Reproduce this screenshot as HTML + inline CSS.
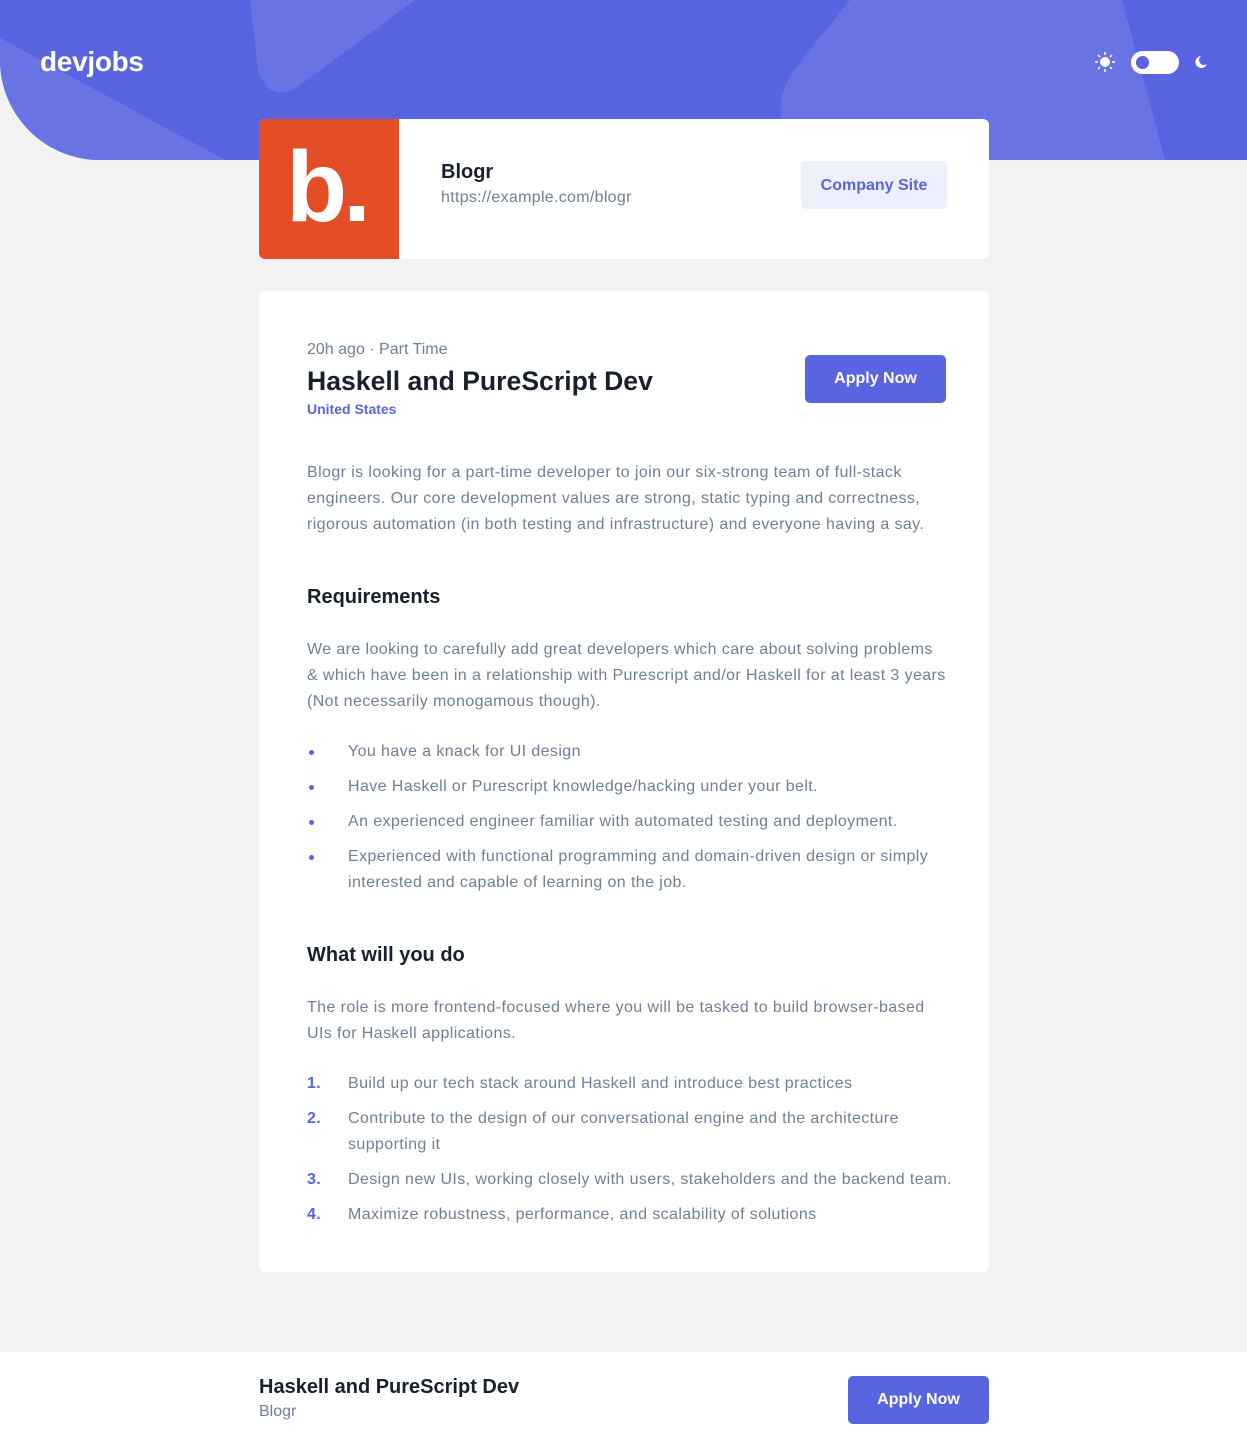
<!DOCTYPE html>
<html><head><meta charset="utf-8"><style>
*{margin:0;padding:0;box-sizing:border-box}
body{width:1247px;height:1448px;background:#F2F2F2;font-family:"Liberation Sans",sans-serif;position:relative;overflow:hidden}
.hdr{position:absolute;left:0;top:0;width:1247px;height:160px;background:#5964E0;border-bottom-left-radius:100px;overflow:hidden}
.logo{position:absolute;left:40px;top:46px;color:#fff;font-size:28px;font-weight:bold;letter-spacing:-0.3px}
.card{position:absolute;background:#fff;border-radius:6px}
p{color:#6E8098;font-size:16px;line-height:26px;letter-spacing:0.4px;white-space:nowrap}
h3{color:#19202D;font-size:20px;font-weight:bold}
ul,ol{list-style:none}
li{position:relative;padding-left:41px;color:#6E8098;font-size:16px;line-height:26px;margin-bottom:9px;letter-spacing:0.4px;white-space:nowrap}
ul li:before{content:"";position:absolute;left:2px;top:11px;width:5px;height:5px;border-radius:50%;background:#5964E0}
ol li span{position:absolute;left:0;color:#5964E0;font-weight:bold}
.btn{position:absolute;background:#5964E0;color:#fff;font-weight:bold;font-size:16px;border-radius:5px;text-align:center;line-height:48px}
</style></head><body>
<div class="hdr">
<svg width="1247" height="160" style="position:absolute;left:0;top:0">
<path d="M0 38 L225 160 L0 160Z" fill="#6A73E4"/>
<path d="M250 0 L415 0 L300 85 Q270 105 258 70Z" fill="#6A73E4"/>
<path d="M850 0 L1122 0 L1165 160 L781 160 L781 100 Q785 80 800 62Z" fill="#6A73E4"/>
</svg>
<div class="logo">devjobs</div>
<svg width="20" height="20" style="position:absolute;left:1095px;top:52px" viewBox="0 0 20 20"><circle cx="10" cy="10" r="5" fill="#fff"/><g stroke="#fff" stroke-width="1.5"><path d="M10 0v3M10 17v3M0 10h3M17 10h3M3 3l2 2M15 15l2 2M3 17l2-2M15 5l2-2"/></g></svg>
<div style="position:absolute;left:1131px;top:51px;width:48px;height:23px;border-radius:12px;background:#fff"><div style="position:absolute;left:5px;top:5px;width:13px;height:13px;border-radius:7px;background:#5964E0"></div></div>
<svg width="14" height="14" style="position:absolute;left:1194px;top:55px" viewBox="0 0 14 14"><path d="M7 1A6 6 0 1 0 13 9 4.5 4.5 0 0 1 7 1Z" fill="#fff"/></svg>
</div>

<div class="card" style="left:259px;top:119px;width:730px;height:140px;overflow:hidden">
<div style="position:absolute;left:0;top:0;width:140px;height:140px;background:#E54D26"></div>
<div style="position:absolute;left:27px;top:18px;color:#fff;font-size:100px;font-weight:bold;line-height:100px;letter-spacing:-4px">b<span style="font-size:100px">.</span></div>
<div style="position:absolute;left:182px;top:42px;color:#19202D;font-size:20px;font-weight:bold">Blogr</div>
<div style="position:absolute;left:182px;top:70px;color:#6E8098;font-size:16px;letter-spacing:0.3px">https://example.com/blogr</div>
<div style="position:absolute;left:542px;top:42px;width:146px;height:48px;background:#EEEFFC;border-radius:5px;color:#5964E0;font-weight:bold;font-size:16px;line-height:50px;text-align:center">Company Site</div>
</div>

<div class="card" style="left:259px;top:291px;width:730px;height:981px">
<div style="position:absolute;left:48px;top:50px;color:#6E8098;font-size:16px">20h ago · Part Time</div>
<div style="position:absolute;left:48px;top:75px;color:#19202D;font-size:26.6px;font-weight:bold">Haskell and PureScript Dev</div>
<div style="position:absolute;left:48px;top:110px;color:#5964E0;font-size:14px;font-weight:bold">United States</div>
<div class="btn" style="left:546px;top:64px;width:141px">Apply Now</div>
<div style="position:absolute;left:48px;top:169px;width:640px">
<p>Blogr is looking for a part-time developer to join our six-strong team of full-stack<br>engineers. Our core development values are strong, static typing and correctness,<br>rigorous automation (in both testing and infrastructure) and everyone having a say.</p>
<h3 style="margin-top:48px">Requirements</h3>
<p style="margin-top:28px">We are looking to carefully add great developers which care about solving problems<br>&amp; which have been in a relationship with Purescript and/or Haskell for at least 3 years<br>(Not necessarily monogamous though).</p>
<ul style="margin-top:24px">
<li>You have a knack for UI design</li>
<li>Have Haskell or Purescript knowledge/hacking under your belt.</li>
<li>An experienced engineer familiar with automated testing and deployment.</li>
<li>Experienced with functional programming and domain-driven design or simply<br>interested and capable of learning on the job.</li>
</ul>
<h3 style="margin-top:48px">What will you do</h3>
<p style="margin-top:28px">The role is more frontend-focused where you will be tasked to build browser-based<br>UIs for Haskell applications.</p>
<ol style="margin-top:24px">
<li><span>1.</span>Build up our tech stack around Haskell and introduce best practices</li>
<li><span>2.</span>Contribute to the design of our conversational engine and the architecture<br>supporting it</li>
<li><span>3.</span>Design new UIs, working closely with users, stakeholders and the backend team.</li>
<li><span>4.</span>Maximize robustness, performance, and scalability of solutions</li>
</ol>
</div>
</div>

<div style="position:absolute;left:0;top:1352px;width:1247px;height:96px;background:#fff">
<div style="position:absolute;left:259px;top:24px;color:#19202D;font-size:20px;font-weight:bold">Haskell and PureScript Dev</div>
<div style="position:absolute;left:259px;top:51px;color:#6E8098;font-size:16px">Blogr</div>
<div class="btn" style="left:848px;top:24px;width:141px">Apply Now</div>
</div>
</body></html>
